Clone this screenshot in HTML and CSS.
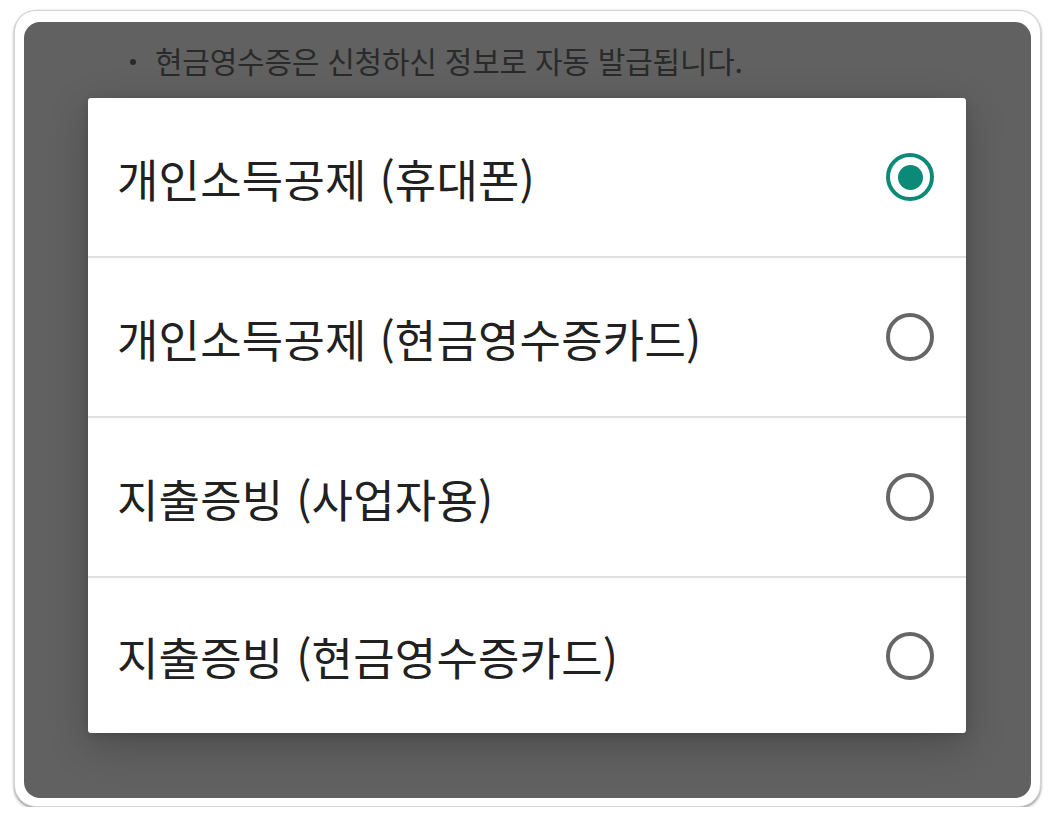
FILE: index.html
```html
<!DOCTYPE html>
<html lang="ko">
<head>
<meta charset="utf-8">
<title>현금영수증</title>
<link rel="stylesheet" href="styles.css">
</head>
<body>
<div class="frame">
  <div class="screen">
    <ul class="notes">
      <li>현금영수증은 신청하신 정보로 자동 발급됩니다.</li>
    </ul>
    <div class="dialog" role="radiogroup">
      <div class="option">
        <span class="label">개인소득공제 (휴대폰)</span>
        <span class="radio checked"><span class="dot"></span></span>
      </div>
      <div class="option">
        <span class="label">개인소득공제 (현금영수증카드)</span>
        <span class="radio"></span>
      </div>
      <div class="option">
        <span class="label">지출증빙 (사업자용)</span>
        <span class="radio"></span>
      </div>
      <div class="option">
        <span class="label">지출증빙 (현금영수증카드)</span>
        <span class="radio"></span>
      </div>
    </div>
  </div>
</div>
</body>
</html>
```

FILE: styles.css
```css
* { box-sizing: border-box; }

html, body {
  margin: 0;
  padding: 0;
  background: #ffffff;
  font-family: "Noto Sans CJK KR", "Noto Sans", sans-serif;
}

.frame {
  margin: 10px 0 0 14px;
  width: 1027px;
  height: 797px;
  padding: 11px 9px 8px 9px;
  background: #ffffff;
  border: 1px solid #d4d4d4;
  border-radius: 22px;
  box-shadow: 0 2px 3px rgba(0, 0, 0, 0.35), 0 0 2px rgba(0, 0, 0, 0.15);
}

.screen {
  position: relative;
  height: 100%;
  background: #616161;
  border-radius: 16px;
  overflow: hidden;
  padding: 19px 0 0 0;
}

.notes {
  margin: 0;
  padding: 0 0 0 106px;
  list-style: none;
  color: #2a2a2a;
  font-size: 30px;
  letter-spacing: -0.25px;
  line-height: 38px;
}

.notes li {
  position: relative;
  padding-left: 25px;
}

.notes li::before {
  content: "";
  position: absolute;
  left: 0;
  top: 18px;
  width: 6px;
  height: 6px;
  border-radius: 50%;
  background: #2a2a2a;
}

.dialog {
  position: absolute;
  left: 64px;
  right: 65px;
  top: 76px;
  background: #ffffff;
  border-radius: 3px;
  box-shadow: 0 12px 40px rgba(0, 0, 0, 0.22), 0 2px 8px rgba(0, 0, 0, 0.12);
  display: flex;
  flex-direction: column;
}

.option {
  height: 160px;
  display: flex;
  align-items: center;
  justify-content: space-between;
  padding: 0 32px 0 29px;
  border-bottom: 2px solid #e0e0e0;
}

.option:last-child {
  height: 155px;
  border-bottom: none;
}

.label {
  font-size: 45px;
  color: #212121;
  letter-spacing: 0.2px;
  line-height: 1;
  padding-top: 2px;
}

.radio {
  width: 48px;
  height: 48px;
  border-radius: 50%;
  border: 4px solid #666666;
  display: flex;
  align-items: center;
  justify-content: center;
}

.radio.checked {
  border-color: #0b8a78;
}

.radio .dot {
  width: 25px;
  height: 25px;
  border-radius: 50%;
  background: #0b8a78;
}
```
